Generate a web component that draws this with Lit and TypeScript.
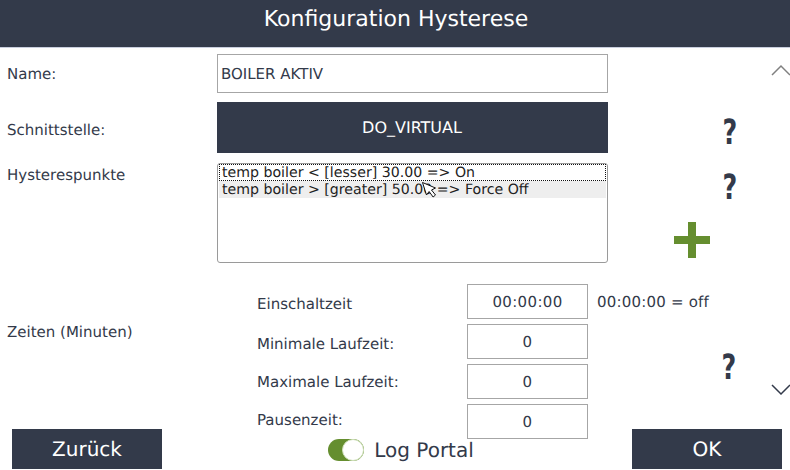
import { LitElement, html, css } from "lit";
import { customElement } from "lit/decorators.js";

const times = [
  { label: "Einschaltzeit", value: "00:00:00", note: "00:00:00 = off", shift: 2 },
  { label: "Minimale Laufzeit:", value: "0", note: "", shift: 2 },
  { label: "Maximale Laufzeit:", value: "0", note: "", shift: 0 },
  { label: "Pausenzeit:", value: "0", note: "", shift: -2 },
];

@customElement("app-root")
export class AppRoot extends LitElement {
  static styles = css`
    :host {
      display: block;
      position: relative;
      width: 790px;
      height: 470px;
      overflow: hidden;
      background: #fff;
      color: #333a4a;
      font-family: "DejaVu Sans", sans-serif;
      font-size: 15px;
      text-rendering: geometricPrecision;
    }
    * { box-sizing: border-box; }
    header {
      height: 48px;
      background: #333a4a;
      border-bottom: 1px solid #c9cede;
      color: #fff;
      font-size: 22px;
      display: flex;
      justify-content: center;
      padding-top: 7px;
      padding-left: 2px;
      line-height: 26px;
    }
    .form {
      padding: 6px 0 0 7px;
      display: grid;
      grid-template-columns: 210px 391px 1fr;
      grid-template-rows: 39px 51px 101px;
      row-gap: 9px;
    }
    .lbl { line-height: 41px; }
    .lbl.mid { line-height: 56px; }
    .lbl.top { line-height: 20px; margin-top: 3px; }
    .name {
      border: 1px solid #a6a6a6;
      padding-left: 3px;
      line-height: 39px;
      color: #333a4a;
    }
    .iface {
      background: #333a4a;
      color: #fff;
      font-size: 16px;
      display: flex;
      align-items: center;
      justify-content: center;
      padding-right: 1px;
    }
    .list {
      margin-top: 1px;
      border: 1px solid #9a9a9a;
      border-radius: 3px;
      padding: 0 1px;
      font-size: 14.15px;
      color: #222;
      line-height: 19px;
    }
    .opt { padding-left: 3px; height: 17px; white-space: nowrap; }
    .opt.focus { outline: 1px dotted #111; outline-offset: -1px; }
    .opt.alt { background: #eeeeee; }
    .q {
      font-size: 30px;
      font-weight: 700;
      line-height: 36px;
      color: #333a4a;
      display: block;
      width: 24px;
      text-align: center;
      transform: translateY(2px) scale(0.85, 1.16);
    }
    .side1 { padding: 12px 0 0 110px; }
    .side2 {
      padding-left: 66px;
      display: grid;
      grid-template-columns: 44px 24px;
      align-items: start;
    }
    .side2 .q { grid-column: 2; margin-top: 7px; }
    .plus { grid-column: 1; width: 36px; height: 36px; margin-top: 12px; }
    .times {
      display: grid;
      grid-template-columns: 250px 210px 121px auto;
      grid-auto-rows: 35px;
      row-gap: 5px;
      padding-left: 7px;
      margin-top: 21px;
      align-items: center;
    }
    .zeiten { grid-column: 1; grid-row: 1 / 5; padding-bottom: 60px; }
    .tl { grid-column: 2; }
    .tv {
      grid-column: 3;
      height: 35px;
      border: 1px solid #a6a6a6;
      text-align: center;
      line-height: 35px;
      letter-spacing: 0.35px;
    }
    .note { grid-column: 4; padding-left: 9px; white-space: nowrap; letter-spacing: 0.2px; }
    .q3 { position: absolute; left: 717px; top: 349px; }
    .up, .down { position: absolute; left: 771px; width: 19px; height: 12px; }
    .up { top: 64px; }
    .down { top: 384px; }
    footer {
      position: absolute;
      left: 12px;
      right: 8px;
      bottom: 1px;
      height: 40px;
      display: flex;
      align-items: center;
      justify-content: space-between;
    }
    .btn {
      width: 150px;
      height: 40px;
      background: #333a4a;
      color: #fff;
      font-size: 20px;
      display: flex;
      align-items: center;
      justify-content: center;
    }
    .log {
      display: flex;
      align-items: center;
      gap: 10px;
      font-size: 20px;
      margin-top: 2px;
      margin-left: 8px;
    }
    .toggle {
      width: 36px;
      height: 22px;
      border-radius: 11px;
      background: #658e2f;
      display: flex;
      justify-content: flex-end;
    }
    .knob {
      width: 22px;
      height: 22px;
      border-radius: 50%;
      background: #fff;
      border: 1px solid #cfe0ba;
    }
    .cursor { position: absolute; left: 421px; top: 181px; width: 16px; height: 18px; }
  `;

  render() {
    return html`
      <header>Konfiguration Hysterese</header>
      <section class="form">
        <div class="lbl">Name:</div>
        <div class="name">BOILER AKTIV</div>
        <div></div>

        <div class="lbl mid">Schnittstelle:</div>
        <div class="iface">DO_VIRTUAL</div>
        <div class="side1"><span class="q">?</span></div>

        <div class="lbl top">Hysterespunkte</div>
        <div class="list">
          <div class="opt focus">temp boiler &lt; [lesser] 30.00 =&gt; On</div>
          <div class="opt alt">temp boiler &gt; [greater] 50.00 =&gt; Force Off</div>
        </div>
        <div class="side2">
          <span class="q">?</span>
          <svg class="plus" viewBox="0 0 36 36">
            <path d="M14 0h8v14h14v8H22v14h-8V22H0v-8h14z" fill="#658e2f"></path>
          </svg>
        </div>
      </section>
      <section class="times">
        <div class="zeiten">Zeiten (Minuten)</div>
        ${times.map(
          (t) => html`
            <div class="tl" style="margin-top:${t.shift * 2}px">${t.label}</div>
            <div class="tv">${t.value}</div>
            ${t.note ? html`<div class="note">${t.note}</div>` : ""}
          `
        )}
      </section>
      <span class="q q3">?</span>
      <svg class="up" viewBox="0 0 19 12">
        <path d="M1 11L10 2l9 9" fill="none" stroke="#808080" stroke-width="1.5"></path>
      </svg>
      <svg class="down" viewBox="0 0 19 12">
        <path d="M1 1l9 9 9-9" fill="none" stroke="#333a4a" stroke-width="1.5"></path>
      </svg>
      <footer>
        <div class="btn">Zurück</div>
        <div class="log">
          <div class="toggle"><div class="knob"></div></div>
          <span>Log Portal</span>
        </div>
        <div class="btn">OK</div>
      </footer>
      <svg class="cursor" viewBox="0 0 16 18">
        <path d="M1.5 1.5L14.5 7 10.5 9l4 5-2.4 2-4-5.5-2.6 3.5z" fill="#fff" stroke="#111" stroke-width="1"></path>
      </svg>
    `;
  }
}
